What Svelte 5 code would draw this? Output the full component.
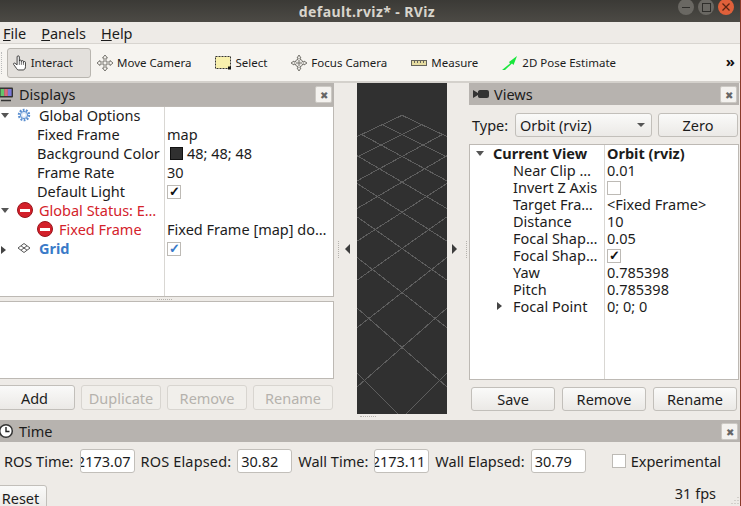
<script>
	const tools = [
		{ id: 'hand', label: 'Interact', active: true },
		{ id: 'move', label: 'Move Camera' },
		{ id: 'select', label: 'Select' },
		{ id: 'focus', label: 'Focus Camera' },
		{ id: 'measure', label: 'Measure' },
		{ id: 'pose', label: '2D Pose Estimate' }
	];

	const views = [
		['Near Clip …', '0.01'],
		['Invert Z Axis', 'off'],
		['Target Fra…', '<Fixed Frame>'],
		['Distance', '10'],
		['Focal Shap…', '0.05'],
		['Focal Shap…', 'on'],
		['Yaw', '0.785398'],
		['Pitch', '0.785398'],
		['Focal Point', '0; 0; 0']
	];

	// ground grid projected to the view, 10 cells seen from one corner
	function project(i, j) {
		const s = i + j;
		const w = 1 - 0.033 * s;
		return [45 + ((i - j) * 56.7) / w / 3, -3 + (-705 + 811 / w) / 3];
	}
	const gridLines = [];
	for (let n = 0; n <= 10; n++) {
		gridLines.push([project(n, 0), project(n, 10)]);
		gridLines.push([project(0, n), project(10, n)]);
	}
</script>

<div class="window">
	<div class="titlebar">
		<span class="title">default.rviz* - RViz</span>
		<div class="winbtns">
			<span class="wb"><i class="dash"></i></span>
			<span class="wb"><i class="box"></i></span>
			<span class="wb close">
				<svg width="10" height="10" viewBox="0 0 10 10"><path d="M1.500 1.500l7 7M8.500 1.500l-7 7" stroke="#5a2412" stroke-width="1.300" /></svg>
			</span>
		</div>
	</div>

	<div class="menubar">
		<span><u>F</u>ile</span>
		<span><u>P</u>anels</span>
		<span><u>H</u>elp</span>
	</div>

	<div class="toolbar">
		<div class="grip"></div>
		{#each tools as t}
			<div class="tool" class:active={t.active}>
				<svg class="ticon" width="18" height="18" viewBox="0 0 18 18">
					{#if t.id === 'hand'}
						<path d="M5.500 11V2.500a1.200 1.200 0 0 1 2.400 0V7a1.100 1.100 0 0 1 2.200 0v.5a1.100 1.100 0 0 1 2.200 0v1a1.100 1.100 0 0 1 2.200 0V13c0 2-1 3.500-2.500 3.500H7c-1 0-1.500-.5-2-1.500l-3.300-4.500c-.6-1 .6-1.800 1.500-1.200z" fill="#fff" stroke="#222" stroke-width="0.900" />
						<path d="M7.900 7v4M10.100 7.500V11M12.300 8.500V11" fill="none" stroke="#222" stroke-width="0.700" />
					{:else if t.id === 'move'}
						<path d="M9 1l2.500 3h-1.500v4h4V6.500L17 9l-3 2.500V10h-4v4h1.500L9 17l-2.500-3H8v-4H4v1.500L1 9l3-2.500V8h4V4H6.500z" fill="#f4f2ee" stroke="#77756f" stroke-width="1" />
					{:else if t.id === 'select'}
						<rect x="1.500" y="2.500" width="15" height="12" fill="#f8f0ad" stroke="#333" stroke-dasharray="2 1" />
						<rect x="14" y="12.500" width="3" height="3" fill="#111" />
					{:else if t.id === 'focus'}
						<path d="M9 1l2 3h-1v1.200A4 4 0 0 1 12.800 8H14V7l3 2-3 2v-1h-1.200A4 4 0 0 1 10 12.800V14h1l-2 3-2-3h1v-1.200A4 4 0 0 1 5.200 10H4v1L1 9l3-2v1h1.200A4 4 0 0 1 8 5.200V4H7z" fill="#e8e6e2" stroke="#77756f" stroke-width="1" />
						<path d="M9 6v6M6 9h6" stroke="#77756f" />
					{:else if t.id === 'measure'}
						<rect x="1.500" y="6.500" width="15" height="5" fill="#e6dca0" stroke="#66645c" />
						<path d="M4.500 7v2M7.500 7v2M10.500 7v2M13.500 7v2" stroke="#66645c" />
					{:else}
						<path d="M1 16l8-6.500-1-1.500 8-6-3.500 9-1.500-1.500L4 16z" fill="#19e63c" />
					{/if}
				</svg>
				<span>{t.label}</span>
			</div>
		{/each}
		<span class="more">»</span>
	</div>

	<div class="main">
		<section class="dock left">
			<header class="dock-head tall">
				<svg class="hicon" width="16" height="16" viewBox="0 0 16 16">
					<rect x="1" y="1.500" width="14" height="10" rx="1" fill="#333" />
					<rect x="2.500" y="3" width="3.700" height="7" fill="#63c46b" />
					<rect x="6.200" y="3" width="3.700" height="7" fill="#d86a7a" />
					<rect x="9.900" y="3" width="3.700" height="7" fill="#7a78d8" />
					<path d="M3 14.500h10" stroke="#333" stroke-width="1.500" />
				</svg>
				<span>Displays</span>
				<span class="close-btn">✖</span>
			</header>

			<div class="tree displays">
				<div class="column-line"></div>
				<div class="row19 first">
					<i class="arrow down"></i>
					<svg class="ricon" width="14" height="14" viewBox="0 0 14 14">
						<circle cx="7" cy="7" r="5" fill="none" stroke="#5b8fd0" stroke-width="2.400" stroke-dasharray="1.800 1.300" />
						<circle cx="7" cy="7" r="3.600" fill="#dbe7f6" stroke="#5b8fd0" />
						<circle cx="7" cy="7" r="1.500" fill="#fff" />
					</svg>
					<span class="name top">Global Options</span>
				</div>
				<div class="row19 prop"><span class="key">Fixed Frame</span><span class="val">map</span></div>
				<div class="row19 prop">
					<span class="key">Background Color</span>
					<span class="val"><i class="swatch"></i>48; 48; 48</span>
				</div>
				<div class="row19 prop"><span class="key">Frame Rate</span><span class="val">30</span></div>
				<div class="row19 prop">
					<span class="key">Default Light</span>
					<span class="val"><span class="check">✓</span></span>
				</div>
				<div class="row19">
					<i class="arrow down"></i>
					<span class="stop"><i></i></span>
					<span class="name err top">Global Status: E…</span>
				</div>
				<div class="row19 child">
					<span class="stop"><i></i></span>
					<span class="name err">Fixed Frame</span>
					<span class="val abs">Fixed Frame [map] do…</span>
				</div>
				<div class="row19">
					<i class="arrow right"></i>
					<svg class="ricon" width="14" height="14" viewBox="0 0 14 14">
						<path d="M7 2.500L13 7 7 11.500 1 7zM4 4.800L10 9.200M10 4.800L4 9.200" fill="none" stroke="#555" stroke-width="1" />
					</svg>
					<span class="name top grid-name">Grid</span>
					<span class="val abs"><span class="check blue">✓</span></span>
				</div>
			</div>

			<div class="split-h"><i class="dots-h"></i></div>
			<div class="list"></div>

			<div class="btn-row">
				<button>Add</button>
				<button disabled>Duplicate</button>
				<button disabled>Remove</button>
				<button disabled>Rename</button>
			</div>
		</section>

		<div class="collapse"><i class="dots-v"></i><i class="tri left-tri"></i></div>

		<div class="viewport">
			<svg width="90" height="331" viewBox="0 0 90 331">
				{#each gridLines as [a, b]}
					<line x1={a[0]} y1={a[1]} x2={b[0]} y2={b[1]} stroke="#5e5e5e" shape-rendering="crispEdges" />
				{/each}
			</svg>
		</div>

		<div class="collapse right-col"><i class="tri right-tri"></i><i class="dots-v"></i></div>

		<section class="dock right">
			<header class="dock-head">
				<svg class="hicon" width="16" height="16" viewBox="0 0 16 16">
					<path d="M0 4l5 3V5.500a2 2 0 0 1 2-1.500h7a2 2 0 0 1 2 2v4a2 2 0 0 1-2 2H7a2 2 0 0 1-2-1.500V9l-5 3z" fill="#333" />
				</svg>
				<span>Views</span>
				<span class="close-btn">✖</span>
			</header>

			<div class="type-row">
				<span class="type-label">Type:</span>
				<div class="combo"><span>Orbit (rviz)</span><i class="combo-arrow"></i></div>
				<button class="zero">Zero</button>
			</div>

			<div class="tree views">
				<div class="column-line"></div>
				<div class="row17 head">
					<i class="arrow down"></i>
					<b class="key">Current View</b>
					<b class="val">Orbit (rviz)</b>
				</div>
				{#each views as [k, v]}
					<div class="row17">
						{#if k === 'Focal Point'}<i class="arrow right fp"></i>{/if}
						<span class="key">{k}</span>
						<span class="val">
							{#if v === 'off'}
								<span class="check"></span>
							{:else if v === 'on'}
								<span class="check">✓</span>
							{:else}
								{v}
							{/if}
						</span>
					</div>
				{/each}
			</div>

			<div class="btn-row view-btns">
				<button>Save</button>
				<button>Remove</button>
				<button>Rename</button>
			</div>
		</section>
	</div>
	<i class="dots-bottom"></i>

	<section class="time">
		<header class="dock-head">
			<svg class="hicon" width="16" height="16" viewBox="0 0 16 16">
				<circle cx="8" cy="8" r="6.300" fill="#fff" stroke="#333" stroke-width="1.500" />
				<path d="M8 4v4.500h3.500" fill="none" stroke="#222" stroke-width="1.400" />
			</svg>
			<span>Time</span>
			<span class="close-btn">✖</span>
		</header>
		<div class="time-row">
			<span class="tl">ROS Time:</span>
			<div class="field clip"><span>12173.07</span></div>
			<span class="tl wide">ROS Elapsed:</span>
			<div class="field"><span>30.82</span></div>
			<span class="tl">Wall Time:</span>
			<div class="field clip"><span>12173.11</span></div>
			<span class="tl">Wall Elapsed:</span>
			<div class="field"><span>30.79</span></div>
			<span class="check exp"></span>
			<span class="tl">Experimental</span>
		</div>
		<div class="bottom-row">
			<button class="reset">Reset</button>
			<span class="fps">31 fps</span>
		</div>
	</section>
	<svg class="size-grip" width="10" height="10" viewBox="0 0 10 10">
		<path d="M8 1v1M5 4v1M8 4v1M2 7v1M5 7v1M8 7v1" stroke="#b5b2ad" fill="none" />
	</svg>
</div>

<style>
	:global(body) {
		margin: 0;
		background: #efebe7;
	}

	.window {
		width: 746px;
		height: 506px;
		margin-left: -6px;
		overflow: hidden;
		position: relative;
		background: #eeebe7;
		color: #1c1c1c;
		font-family: 'Noto Sans', sans-serif;
		font-size: 14.500px;
		border-right: 1px solid #8a3a2a;
		box-sizing: content-box;
	}

	.titlebar {
		height: 22px;
		background: linear-gradient(#3b3a36, #4c4a45);
		position: relative;
		display: flex;
		align-items: center;
		justify-content: center;
	}

	.title {
		color: #d8d4cc;
		font-weight: 700;
		font-size: 14px;
		letter-spacing: 0.4px;
	}

	.winbtns {
		position: absolute;
		right: 6px;
		top: -1px;
		display: flex;
		gap: 4px;
	}

	.wb {
		width: 16px;
		height: 16px;
		border-radius: 50%;
		background: #6a6863;
		display: flex;
		align-items: center;
		justify-content: center;
	}

	.wb.close {
		background: #e0603a;
	}

	.dash {
		width: 8px;
		height: 1px;
		background: #2f2e2b;
	}

	.box {
		width: 7px;
		height: 7px;
		border: 1px solid #2f2e2b;
	}

	.menubar {
		height: 21px;
		padding-left: 9px;
		display: flex;
		gap: 15px;
		align-items: center;
		border-bottom: 1px solid #d8d5d0;
	}

	.toolbar {
		height: 37px;
		background: #f6f4f0;
		border-bottom: 2px solid #d4d1cc;
		display: flex;
		align-items: center;
		padding-left: 7px;
		position: relative;
		box-sizing: content-box;
	}

	.grip {
		width: 2px;
		height: 22px;
		margin-right: 3px;
		border-left: 1px dotted #bbb;
	}

	.tool {
		display: flex;
		align-items: center;
		gap: 3px;
		height: 30px;
		padding: 0 17px 0 4px;
		font-size: 11.500px;
		border: 1px solid transparent;
		border-radius: 3px;
		box-sizing: border-box;
		white-space: nowrap;
	}

	.tool.active {
		background: #e3e0dc;
		border-color: #b9b6b0;
		width: 84px;
		gap: 2px;
	}

	.more {
		position: absolute;
		right: 5px;
		top: 7px;
		font-size: 15px;
		font-weight: 700;
		color: #111;
	}

	.main {
		display: flex;
		height: 331px;
		margin-bottom: 6px;
	}

	.dock {
		display: flex;
		flex-direction: column;
	}

	.dock.left {
		width: 340px;
	}

	.dock.right {
		width: 270px;
	}

	.dock-head {
		height: 22px;
		flex: none;
		background: #b7b3af;
		display: flex;
		align-items: center;
		padding-left: 4px;
		position: relative;
		gap: 5px;
	}

	.dock-head.tall {
		height: 23px;
		padding-bottom: 1px;
		box-sizing: border-box;
	}

	.hicon {
		flex: none;
	}

	.close-btn {
		position: absolute;
		right: 2px;
		top: 3px;
		width: 15px;
		height: 15px;
		background: #f4f2ef;
		border: 1px solid #ccc9c4;
		border-radius: 2px;
		font-size: 10px;
		color: #666;
		display: flex;
		align-items: center;
		justify-content: center;
	}

	.tree {
		background: #fff;
		border: 1px solid #bdb9b4;
		box-sizing: border-box;
		position: relative;
	}

	.displays {
		height: 191px;
	}

	.column-line {
		position: absolute;
		top: 0;
		bottom: 0;
		width: 1px;
		background: #d9d7d3;
	}

	.displays .column-line {
		left: 169px;
	}

	.views .column-line {
		left: 134px;
	}

	.row19 {
		height: 19px;
		line-height: 19px;
		position: relative;
	}

	.row19.first {
		margin-top: -1px;
	}

	.row19 .key,
	.row19 .val {
		position: absolute;
	}

	.row19 .key {
		left: 42px;
	}

	.row19 .val {
		left: 172px;
		top: 0;
		height: 19px;
		display: flex;
		align-items: center;
	}

	.arrow {
		position: absolute;
		width: 0;
		height: 0;
		border-style: solid;
		border-color: transparent;
	}

	.arrow.down {
		border-width: 5px 4px 0;
		border-top-color: #555;
	}

	.arrow.right {
		border-width: 4px 0 4px 5px;
		border-left-color: #444;
	}

	.row19 .arrow {
		left: 6px;
		top: 7px;
	}

	.ricon,
	.stop {
		position: absolute;
		left: 22px;
		top: 2px;
	}

	.stop {
		width: 16px;
		height: 16px;
		border-radius: 50%;
		background: #d3202a;
		border: 1px solid #9a141c;
		box-sizing: border-box;
		display: flex;
		align-items: center;
		justify-content: center;
		left: 22px;
		top: 1px;
	}

	.stop i {
		width: 10px;
		height: 3px;
		background: #fff;
	}

	.child .stop {
		left: 42px;
	}

	.name {
		position: absolute;
		left: 64px;
	}

	.name.top {
		left: 44px;
	}

	.err {
		color: #d4232b;
	}

	.grid-name {
		color: #3a7ac8;
		font-weight: 700;
	}

	.swatch {
		display: inline-block;
		width: 13px;
		height: 13px;
		background: #303030;
		border: 1px solid #111;
		margin: 0 4px 0 3px;
		box-sizing: border-box;
	}

	.check {
		display: flex;
		width: 12px;
		height: 12px;
		border: 1px solid #bdbab5;
		background: #fff;
		align-items: center;
		justify-content: center;
		font-size: 13px;
		font-weight: 700;
		line-height: 1;
		color: #111;
	}

	.check.blue {
		color: #3a7ac8;
	}

	.split-h {
		height: 4px;
		flex: none;
		display: flex;
		justify-content: center;
		align-items: center;
	}

	.dots-h {
		width: 15px;
		border-top: 1px dotted #b5b2ad;
	}

	.list {
		height: 78px;
		flex: none;
		background: #fff;
		border: 1px solid #bdb9b4;
		box-sizing: border-box;
	}

	.btn-row {
		display: flex;
		gap: 6px;
		margin-top: 6px;
	}

	button {
		height: 25px;
		width: 80px;
		padding: 0;
		font: inherit;
		color: #1c1c1c;
		background: linear-gradient(#fafaf9, #ebe9e6);
		border: 1px solid #c2bfba;
		border-radius: 3px;
	}

	button:disabled {
		color: #b5b2ad;
		background: #f1efeb;
		border-color: #d8d5d0;
	}

	.collapse {
		width: 23px;
		flex: none;
		position: relative;
	}

	.right-col {
		width: 22px;
	}

	.dots-v {
		position: absolute;
		left: 4px;
		top: 158px;
		height: 17px;
		border-left: 1px dotted #b5b2ad;
	}

	.right-col .dots-v {
		left: 19px;
	}

	.dots-bottom {
		position: absolute;
		left: 366px;
		top: 416px;
		width: 16px;
		border-top: 1px dotted #b5b2ad;
	}

	.size-grip {
		position: absolute;
		right: 0;
		bottom: 0;
	}

	.tri {
		position: absolute;
		top: 161px;
		width: 0;
		height: 0;
		border-style: solid;
		border-color: transparent;
	}

	.left-tri {
		left: 11px;
		border-width: 5px 5px 5px 0;
		border-right-color: #3c3c3c;
	}

	.right-tri {
		left: 5px;
		border-width: 5px 0 5px 5px;
		border-left-color: #3c3c3c;
	}

	.viewport {
		width: 90px;
		flex: none;
		background: #303030;
		height: 331px;
		overflow: hidden;
	}

	.viewport svg {
		display: block;
	}

	.type-row {
		height: 39px;
		flex: none;
		display: flex;
		align-items: center;
		padding-left: 3px;
		box-sizing: border-box;
	}

	.type-label {
		width: 37px;
		flex: none;
	}

	.combo {
		width: 137px;
		height: 24px;
		margin-left: 6px;
		box-sizing: border-box;
		border: 1px solid #c2bfba;
		border-radius: 3px;
		background: linear-gradient(#fafaf9, #ebe9e6);
		display: flex;
		align-items: center;
		justify-content: space-between;
		padding: 0 6px 0 4px;
	}

	.combo-arrow {
		width: 0;
		height: 0;
		border-style: solid;
		border-width: 4px 4px 0;
		border-color: #555 transparent transparent;
	}

	.zero {
		margin-left: 6px;
		height: 24px;
	}

	.views {
		height: 236px;
	}

	.row17 {
		height: 17px;
		line-height: 17px;
		position: relative;
	}

	.row17 .key {
		position: absolute;
		left: 43px;
	}

	.row17 .val {
		position: absolute;
		left: 137px;
		top: 0;
		height: 17px;
		display: flex;
		align-items: center;
	}

	.head .key {
		left: 23px;
	}

	.row17 .arrow.down {
		left: 6px;
		top: 6px;
	}

	.row17 .fp {
		left: 27px;
		top: 4px;
	}

	.view-btns {
		margin-top: 7px;
		padding-left: 2px;
		gap: 7px;
	}

	.view-btns button {
		width: 84px;
		height: 24px;
	}

	.time {
		height: 86px;
	}

	.time-row {
		height: 24px;
		margin-top: 7px;
		display: flex;
		align-items: center;
		padding-left: 10px;
	}

	.tl {
		white-space: nowrap;
	}

	.tl.wide {
		letter-spacing: 0.16px;
	}

	.field {
		width: 55px;
		height: 24px;
		margin: 0 6px;
		flex: none;
		box-sizing: border-box;
		background: #fff;
		border: 1px solid #c2bfba;
		border-radius: 3px;
		display: flex;
		align-items: center;
		padding: 0 3px;
		overflow: hidden;
	}

	.field.clip {
		justify-content: flex-end;
	}

	.check.exp {
		margin-left: 20px;
		margin-right: 5px;
	}

	.bottom-row {
		display: flex;
		justify-content: space-between;
		align-items: flex-start;
		margin-top: 12px;
	}

	.reset {
		width: 53px;
		height: 25px;
		flex: none;
	}

	.fps {
		margin: -2px 24px 0 0;
	}

	.main .dock.left .btn-row button:first-child {
		width: 81px;
	}
</style>
